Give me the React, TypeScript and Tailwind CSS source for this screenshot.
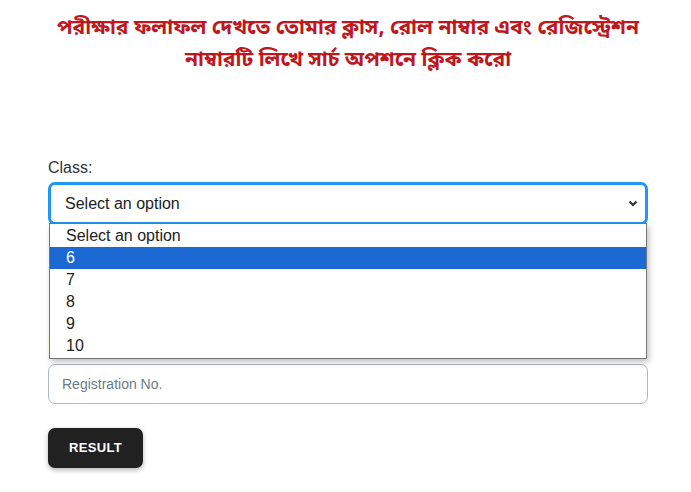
const options = ["Select an option", "6", "7", "8", "9", "10"];

export default function App() {
  return (
    <div className="min-h-[492px] bg-white font-['Liberation_Sans',Arial,sans-serif] text-[#222]">
      <div className="pl-[48px] pr-[43px] pt-[13px]">
        <h1 className="text-center text-[21px] leading-[32px] font-bold text-[#c0171d] font-['Noto_Sans_Bengali','Noto_Sans','Liberation_Sans',sans-serif]">
          <span className="block whitespace-nowrap">পরীক্ষার ফলাফল দেখতে তোমার ক্লাস, রোল নাম্বার এবং রেজিস্ট্রেশন</span>
          <span className="block whitespace-nowrap">নাম্বারটি লিখে সার্চ অপশনে ক্লিক করো</span>
        </h1>

        <div className="mt-[81px]">
          <label className="block text-[16px] leading-[20px] text-[#333]">Class:</label>
          <div className="relative mt-[4px]">
            <div className="flex h-[43px] items-center justify-between rounded-[7px] border-[3px] border-[#2196f3] pl-[14px] pr-[7px] text-[16px]">
              <span>Select an option</span>
              <svg width="10" height="7" viewBox="0 0 10 7" className="text-[#333]">
                <path d="M1.5 1.5 L5 5 L8.5 1.5" fill="none" stroke="currentColor" strokeWidth="2.2" />
              </svg>
            </div>

            <div className="absolute left-[1px] right-[1px] top-[41px] z-10 border border-[#767676] bg-white py-[1px] shadow-[2px_3px_6px_rgba(0,0,0,0.25)]">
              {options.map((o, i) => (
                <div
                  key={o}
                  className={`h-[22px] pl-[16px] text-[16px] leading-[22px] ${
                    i === 1 ? "bg-[#1b69d3] text-white" : "text-[#222]"
                  }`}
                >
                  {o}
                </div>
              ))}
            </div>
          </div>

          {/* roll field sits behind the open dropdown */}
          <div className="mt-[44px] h-[40px]" />

          <label className="mt-[23px] block text-[16px] leading-[24px] text-[#333]">Registration No:</label>
          <input
            placeholder="Registration No."
            className="mt-[8px] block h-[40px] w-full rounded-[7px] border border-[#aeb9c3] px-[13px] text-[14px] placeholder:text-[#6c7a86] outline-none"
          />

          <button className="mt-[24px] h-[40px] w-[95px] rounded-[7px] bg-[#212121] text-[13px] font-bold tracking-[0.3px] text-white shadow-[0_2px_5px_rgba(0,0,0,0.3)]">
            RESULT
          </button>
        </div>
      </div>
    </div>
  );
}
